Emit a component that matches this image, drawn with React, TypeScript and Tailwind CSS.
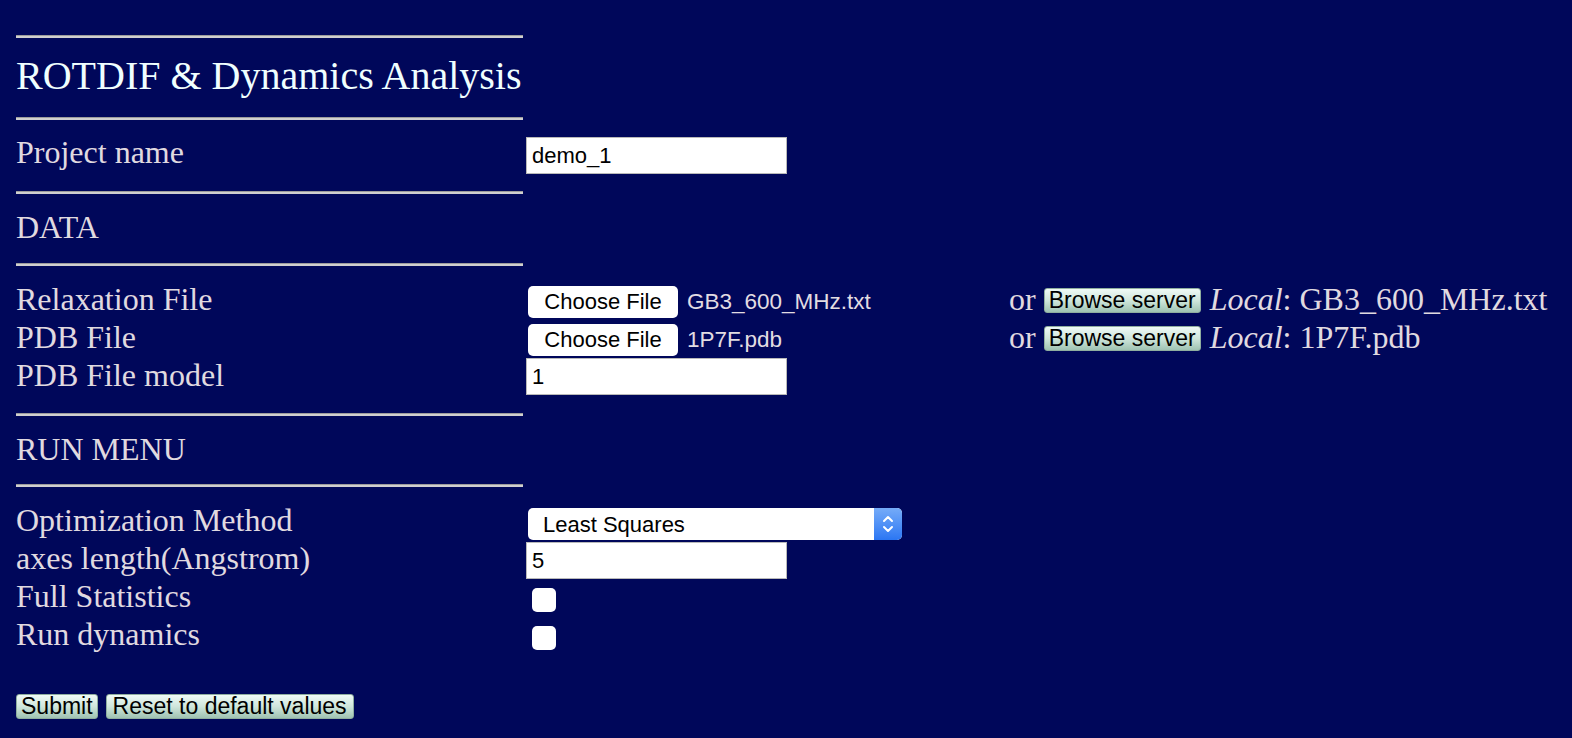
const serif = "font-['Liberation_Serif','Times_New_Roman',serif]";
const sans = "font-['Liberation_Sans',Arial,sans-serif]";

const Rule = () => (
  <div className="h-[3px] w-[507px] border-t border-t-[#9c9c9c] bg-[#cfcfcf]" />
);

const Label = ({ children }: { children: React.ReactNode }) => (
  <div className={`${serif} text-[32px] leading-[38px] text-[#e0dae0] whitespace-nowrap`}>{children}</div>
);

const TextBox = ({ value, className = "" }: { value: string; className?: string }) => (
  <div
    className={`${sans} ml-0 flex h-[37px] w-[261px] items-center border border-[#b9b9b9] bg-white pl-[5px] text-[22px] text-black ${className}`}
  >
    {value}
  </div>
);

const ChooseFile = ({ name }: { name: string }) => (
  <div className={`${sans} ml-[2px] mt-[5px] flex items-center`}>
    <div className="flex h-[32px] w-[150px] items-center justify-center rounded-[5px] bg-white text-[22px] text-black">
      Choose File
    </div>
    <span className="ml-[9px] text-[22.5px] text-[#e2dde2]">{name}</span>
  </div>
);

const GreenButton = ({ children, className = "" }: { children: React.ReactNode; className?: string }) => (
  <div
    className={`${sans} flex h-[25px] items-center rounded-[3px] border border-[#8fae9f] bg-gradient-to-b from-[#effaf6] via-[#cfe6dc] to-[#9fc3b2] px-[4px] text-[23px] leading-[23px] text-black ${className}`}
  >
    {children}
  </div>
);

const ServerPick = ({ name }: { name: string }) => (
  <div className={`${serif} flex h-[38px] items-start text-[32px] text-[#e0dae0] whitespace-nowrap`}>
    <span className="leading-[38px]">or</span>
    <GreenButton className="ml-[8px] mt-[8px]">Browse server</GreenButton>
    <span className="ml-[9px] leading-[38px]">
      <i>Local</i>: {name}
    </span>
  </div>
);

const Checkbox = () => (
  <div className="ml-[6px] mt-[11px] h-[24px] w-[24px] rounded-[5px] bg-white" />
);

const Row = ({ children }: { children: React.ReactNode }) => (
  <div className="grid h-[38px] grid-cols-[510px_483px_1fr]">{children}</div>
);

export default function App() {
  return (
    <div className="min-h-screen w-full bg-[#00075a] pl-4 pt-[35px] pb-[20px]">
      <Rule />
      <div className={`${serif} h-[79px] pt-[14px] text-[40px] leading-[48px] text-[#f0ffff] whitespace-nowrap`}>
        ROTDIF &amp; Dynamics Analysis
      </div>
      <Rule />

      <div className="grid h-[71px] grid-cols-[510px_483px_1fr]">
        <div className="pt-[13px]">
          <Label>Project name</Label>
        </div>
        <TextBox value="demo_1" className="mt-[17px] h-[36px]" />
      </div>
      <Rule />

      <div className="h-[69px] pt-[14px]">
        <Label>DATA</Label>
      </div>
      <Rule />

      <div className="pt-[14px] pb-[19px]">
        <Row>
          <Label>Relaxation File</Label>
          <ChooseFile name="GB3_600_MHz.txt" />
          <ServerPick name="GB3_600_MHz.txt" />
        </Row>
        <Row>
          <Label>PDB File</Label>
          <ChooseFile name="1P7F.pdb" />
          <ServerPick name="1P7F.pdb" />
        </Row>
        <Row>
          <Label>PDB File model</Label>
          <TextBox value="1" className="mt-[2px]" />
        </Row>
      </div>
      <Rule />

      <div className="h-[68px] pt-[14px]">
        <Label>RUN MENU</Label>
      </div>
      <Rule />

      <div className="pt-[14px]">
        <Row>
          <Label>Optimization Method</Label>
          <div className={`${sans} ml-[2px] mt-[7px] flex h-[32px] w-[374px] items-center rounded-[5px] bg-white`}>
            <span className="flex-1 pl-[15px] text-[22px] text-black">Least Squares</span>
            <div className="flex h-full w-[28px] items-center justify-center rounded-r-[5px] bg-gradient-to-b from-[#75abf8] to-[#2a76f3]">
              <svg width="14" height="22" viewBox="0 0 14 22" fill="none" stroke="white" strokeWidth="2" strokeLinecap="round" strokeLinejoin="round">
                <path d="M3 8 L7 4 L11 8" />
                <path d="M3 14 L7 18 L11 14" />
              </svg>
            </div>
          </div>
        </Row>
        <Row>
          <Label>axes length(Angstrom)</Label>
          <TextBox value="5" className="mt-[3px]" />
        </Row>
        <Row>
          <Label>Full Statistics</Label>
          <Checkbox />
        </Row>
        <Row>
          <Label>Run dynamics</Label>
          <Checkbox />
        </Row>
      </div>

      <div className="mt-[41px] flex gap-[8px]">
        <GreenButton className="px-[4px]">Submit</GreenButton>
        <GreenButton className="px-[6px]">Reset to default values</GreenButton>
      </div>
    </div>
  );
}
